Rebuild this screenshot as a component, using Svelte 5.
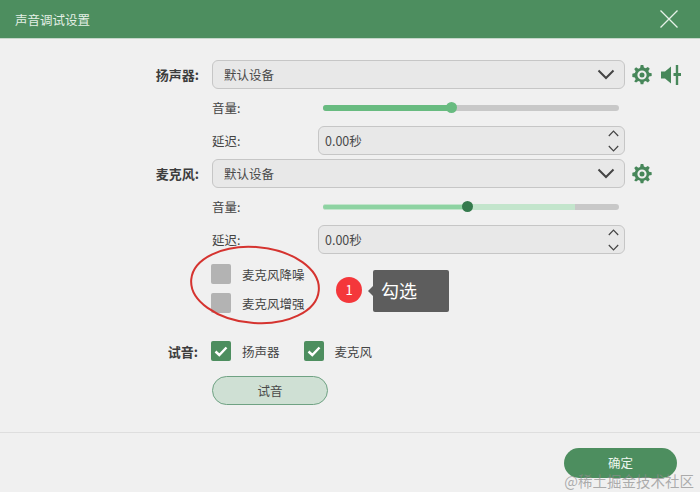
<script>
	const gear = 'M7.8 0h2.4l.5 2.3 1.600.7 2-1.300 1.700 1.700-1.300 2 .7 1.600 2.300.5v2.400l-2.300.5-.7 1.600 1.300 2-1.700 1.700-2-1.300-1.600.7-.5 2.300H7.800l-.5-2.300-1.600-.7-2 1.300L2 14.800l1.300-2-.7-1.600-2.300-.5V7.800l2.300-.5.7-1.600-1.300-2L3.700 2l2 1.300 1.600-.7z';
</script>

{#snippet gearIcon()}
	<svg class="gear" width="20" height="20" viewBox="0 0 18 18">
		<path d={gear} fill="#47875a" />
		<circle cx="9" cy="9" r="3.2" fill="none" stroke="#f0f0f0" stroke-width="1.9" />
		<circle cx="9" cy="9" r="1.6" fill="#47875a" />
	</svg>
{/snippet}

{#snippet selectBox()}
	<div class="field select">
		<span>默认设备</span>
		<svg width="18" height="11" viewBox="0 0 18 11"><path d="M1.500 1.500 9 9l7.500-7.500" fill="none" stroke="#444" stroke-width="2" /></svg>
	</div>
{/snippet}

{#snippet spinBox()}
	<div class="delay">
		<span class="sub-label">延迟:</span>
		<div class="field spin">
			<span>0.00秒</span>
			<div class="arrows">
				<svg width="11" height="7" viewBox="0 0 11 7"><path d="M.8 6 5.500 1.200 10.200 6" fill="none" stroke="#444" stroke-width="1.200" /></svg>
				<svg width="11" height="7" viewBox="0 0 11 7"><path d="M.8 1 5.500 5.800 10.200 1" fill="none" stroke="#444" stroke-width="1.200" /></svg>
			</div>
		</div>
	</div>
{/snippet}

{#snippet tick()}
	<span class="check on">
		<svg width="14" height="11" viewBox="0 0 14 11"><path d="M1.500 5.500 5.300 9 12.500 1.500" fill="none" stroke="#fff" stroke-width="2.400" /></svg>
	</span>
{/snippet}

<div class="dialog">
	<header>
		<span class="title">声音调试设置</span>
		<svg class="close" width="20" height="20" viewBox="0 0 20 20"><path d="M1.500 1.500l17 17M18.500 1.500l-17 17" stroke="#e6f2e8" stroke-width="1.300" /></svg>
	</header>

	<main>
		<div class="row">
			<span class="label">扬声器:</span>
			{@render selectBox()}
			<div class="tools">
				{@render gearIcon()}
				<svg class="speaker" width="24" height="22" viewBox="0 0 24 22">
					<path d="M1 7.500h4L11 2.500v17l-6-5H1z" fill="#47875a" />
					<path d="M17 1v20" stroke="#47875a" stroke-width="2.400" />
					<path d="M13.500 9h7.500v3h-7.500z" fill="#47875a" />
				</svg>
			</div>
		</div>
		<div class="volume">
			<span class="sub-label">音量:</span>
			<div class="track">
				<div class="fill" style="width: 128px"></div>
				<div class="thumb" style="left: 128px"></div>
			</div>
		</div>
		{@render spinBox()}

		<div class="row mic">
			<span class="label">麦克风:</span>
			{@render selectBox()}
			<div class="tools">{@render gearIcon()}</div>
		</div>
		<div class="volume">
			<span class="sub-label">音量:</span>
			<div class="track">
				<div class="level" style="width: 252px"></div>
				<div class="fill thin" style="width: 144px"></div>
				<div class="thumb dark" style="left: 144px"></div>
			</div>
		</div>
		{@render spinBox()}

		<div class="options">
			<label class="opt"><span class="check"></span>麦克风降噪</label>
			<label class="opt"><span class="check"></span>麦克风增强</label>

			<svg class="ring" width="134" height="82" viewBox="0 0 134 82">
				<ellipse cx="67" cy="41" rx="64" ry="38" transform="rotate(5 67 41)" fill="none" stroke="#d5332f" stroke-width="2" />
			</svg>
			<span class="badge">1</span>
			<div class="tip">勾选</div>
		</div>

		<div class="row try">
			<span class="label">试音:</span>
			<label class="opt">{@render tick()}扬声器</label>
			<label class="opt">{@render tick()}麦克风</label>
		</div>
		<button class="test">试音</button>
	</main>

	<footer>
		<button class="ok">确定</button>
		<span class="mark">@稀土掘金技术社区</span>
	</footer>
</div>

<style>
	:global(body) {
		margin: 0;
		background: #f0f0f0;
	}

	.dialog {
		width: 700px;
		height: 492px;
		display: flex;
		flex-direction: column;
		overflow: hidden;
		background: #f0f0f0;
		color: #444;
		font-family: "Noto Sans CJK SC", "Liberation Sans", sans-serif;
		font-size: 12.500px;
	}

	header {
		box-sizing: border-box;
		height: 39px;
		flex-shrink: 0;
		display: flex;
		align-items: center;
		justify-content: space-between;
		padding: 0 21px 0 15px;
		background: #4d8e5f;
		border-bottom: 1px solid #c5d6ca;
		color: #e4f0e6;
	}

	main {
		flex: 1;
		padding: 21px 0 0 212px;
	}

	.row {
		display: flex;
		align-items: center;
		position: relative;
		height: 29px;
	}

	.label {
		position: absolute;
		right: calc(100% + 13px);
		white-space: nowrap;
		font-size: 13px;
		font-weight: 700;
		color: #3d3d3d;
	}

	.field {
		box-sizing: border-box;
		height: 29px;
		display: flex;
		align-items: center;
		justify-content: space-between;
		background: #e8e8e8;
		border: 1px solid #c6c6c6;
		border-radius: 6px;
		color: #4a4a4a;
	}

	.select {
		width: 413px;
		padding: 0 9px 0 11px;
	}

	.tools {
		display: flex;
		align-items: center;
		gap: 8px;
		margin-left: 7px;
	}

	.volume {
		display: flex;
		align-items: center;
		height: 37px;
	}

	.sub-label {
		flex-shrink: 0;
		width: 30px;
		white-space: nowrap;
	}

	.track {
		position: relative;
		width: 296px;
		height: 6px;
		margin-left: 81px;
		border-radius: 3px;
		background: #c8c8c8;
	}

	.fill {
		position: absolute;
		inset: 0 auto 0 0;
		background: #68bb80;
		border-radius: 3px;
	}

	.fill.thin {
		top: 1px;
		bottom: 1px;
		background: #8ed3a2;
	}

	.level {
		position: absolute;
		inset: 0 auto 0 0;
		background: #c3e5cc;
		border-radius: 3px 0 0 3px;
	}

	.thumb {
		position: absolute;
		top: 50%;
		width: 11px;
		height: 11px;
		margin: -5.500px 0 0 -5.500px;
		border-radius: 50%;
		background: #68bb80;
	}

	.thumb.dark {
		background: #357a4d;
	}

	.delay {
		display: flex;
		align-items: center;
		height: 29px;
	}

	.spin {
		width: 307px;
		margin-left: 76px;
		padding: 0 5px 0 6px;
	}

	.arrows {
		display: flex;
		flex-direction: column;
		gap: 8px;
	}

	.mic {
		margin-top: 4px;
	}

	.options {
		position: relative;
		display: flex;
		flex-direction: column;
		gap: 9px;
		margin-top: 10px;
		margin-left: -1px;
	}

	.opt {
		display: flex;
		align-items: center;
		gap: 11px;
		height: 20px;
	}

	.check {
		box-sizing: border-box;
		width: 20px;
		height: 20px;
		display: flex;
		align-items: center;
		justify-content: center;
		border-radius: 2px;
		background: #b3b3b3;
	}

	.check.on {
		background: #4d8e5f;
	}

	.ring {
		position: absolute;
		left: -23px;
		top: -20px;
	}

	.badge {
		position: absolute;
		left: 125px;
		top: 13px;
		width: 26px;
		height: 26px;
		border-radius: 50%;
		background: #f4373b;
		color: #fff;
		font-size: 13px;
		line-height: 26px;
		text-align: center;
	}

	.tip {
		position: absolute;
		left: 162px;
		top: 6px;
		box-sizing: border-box;
		width: 76px;
		height: 42px;
		padding-left: 8px;
		border-radius: 2px;
		background: #5d5d5d;
		color: #fff;
		font-size: 18px;
		line-height: 40px;
	}

	.tip::before {
		content: "";
		position: absolute;
		left: -5px;
		top: 16px;
		border: 5px solid transparent;
		border-left: 0;
		border-right-color: #5d5d5d;
	}

	.try {
		height: 20px;
		gap: 24px;
		margin-top: 28px;
		margin-left: -1px;
	}

	.test {
		display: block;
		width: 116px;
		height: 29px;
		margin-top: 15px;
		padding: 0;
		border: 1.500px solid #6fa283;
		border-radius: 15px;
		background: #cfe0d4;
		color: #4a4a4a;
		font: inherit;
	}

	footer {
		box-sizing: border-box;
		position: relative;
		height: 60px;
		flex-shrink: 0;
		display: flex;
		justify-content: flex-end;
		align-items: flex-start;
		padding: 15px 23px 0 0;
		border-top: 1px solid #dedede;
	}

	.ok {
		width: 113px;
		height: 30px;
		padding: 0 0 2px;
		border: 0;
		border-radius: 15px;
		background: #4d8e5f;
		color: #eef6ef;
		font: inherit;
	}

	.mark {
		position: absolute;
		right: 6px;
		bottom: 4px;
		color: rgba(140, 140, 140, 0.7);
		font-size: 14.500px;
		line-height: 15px;
	}
</style>
